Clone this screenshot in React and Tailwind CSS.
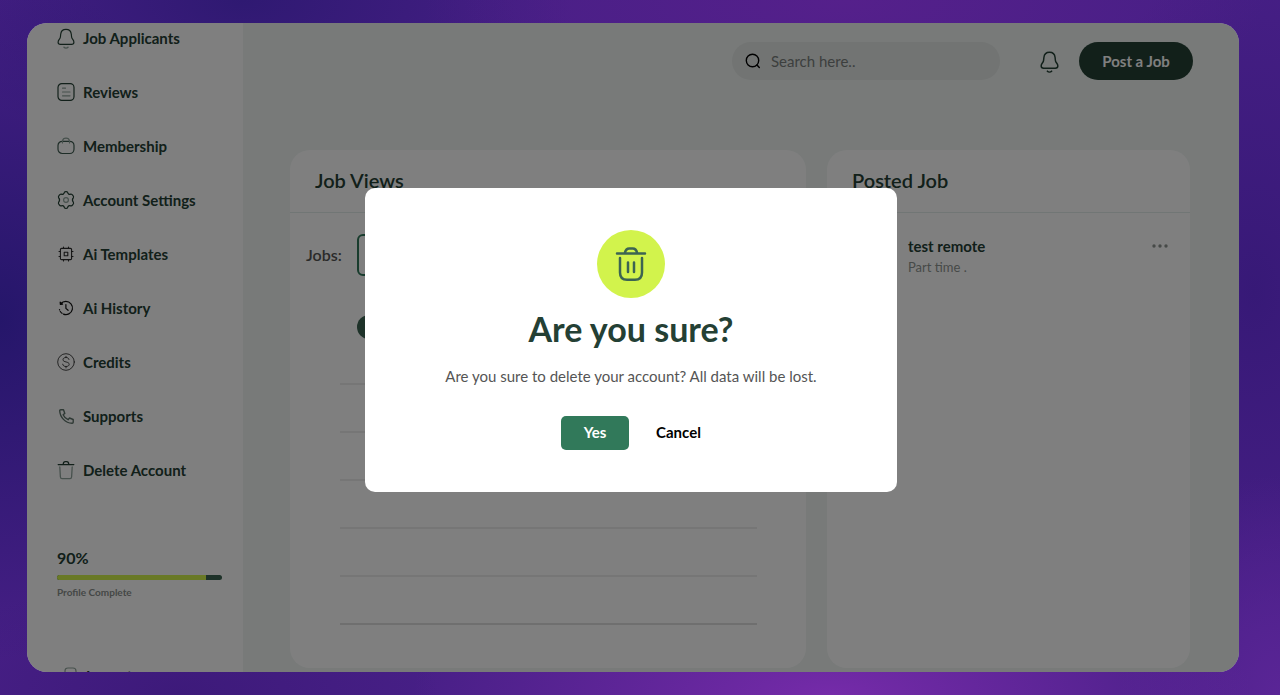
import { useState } from 'react';

const iconProps = {
  width: 18,
  height: 18,
  viewBox: '0 0 18 18',
  fill: 'none',
  strokeLinecap: 'round',
  strokeLinejoin: 'round',
};

const BellIcon = ({ size = 18, soft = '#8fa39b', weight = 1.2 }) => (
  <svg {...iconProps} width={size} height={size} stroke="#244034" strokeWidth={weight} className="overflow-visible">
    <path d="M9 .3C6 .3 4 2.300 3.700 5.200L3.400 8C3.200 10.200 1.100 10.900 1.100 13.200c0 1.500 1 2.100 2.400 2.100h11c1.400 0 2.400-.6 2.400-2.100 0-2.300-2.100-3-2.300-5.200l-.3-2.800C14 2.300 12 .3 9 .3z" />
    <path d="M7 18.200c1 1 3 1 4 0" stroke={soft} strokeWidth="1.500" />
  </svg>
);

const ReviewsIcon = () => (
  <svg {...iconProps} stroke="#244034" strokeWidth="1.200">
    <rect x="1" y=".6" width="16" height="16.800" rx="3.800" />
    <path d="M5.500 5.200h3M5.500 9h7.500M5.500 12.800h7.500" stroke="#8fa39b" />
  </svg>
);

const BagIcon = () => (
  <svg {...iconProps} stroke="#3d5a4f" strokeWidth="1.200">
    <rect x="1" y="4.300" width="16" height="12.200" rx="4.200" />
    <path d="M5.500 4.100C6 .2 12 .2 12.500 4.100M5.500 4.500v1.500M12.500 4.500v1.500" stroke="#8fa39b" />
  </svg>
);

const GearIcon = () => (
  <svg {...iconProps} stroke="#244034" strokeWidth="1.200">
    <path d="M7.400 1.400c.3-1 2.900-1 3.200 0 .4 1.700 1.600 2.300 3.100 1.700 1.400-.5 3.500 2.500 2.700 3.600-1.300 1.500-1.300 3.100 0 4.600.8 1.100-1.300 4.100-2.700 3.600-1.500-.6-2.700 0-3.100 1.700-.3 1-2.900 1-3.200 0-.4-1.700-1.600-2.300-3.100-1.700-1.400.5-3.500-2.500-2.700-3.600 1.300-1.500 1.300-3.100 0-4.600-.8-1.100 1.300-4.100 2.700-3.600 1.500.6 2.700 0 3.100-1.700z" />
    <circle cx="9" cy="9" r="2.400" stroke="#8fa39b" />
  </svg>
);

const ChipIcon = () => (
  <svg {...iconProps} stroke="#2a2a2a" strokeWidth="1.100">
    <rect x="3.400" y="3.400" width="11.200" height="11.200" rx="1.200" />
    <rect x="7.200" y="7.200" width="3.600" height="3.600" />
    <path d="M6.500 2v1.400M11.500 2v1.400M6.500 14.600V16M11.500 14.600V16M2 6.500h1.400M2 11.500h1.400M14.600 6.500H16M14.600 11.500H16" />
  </svg>
);

const HistoryIcon = () => (
  <svg {...iconProps} stroke="#111" strokeWidth="1.200">
    <path d="M3.700 4.900a6.600 6.600 0 1 1-1.200 5.700" strokeDasharray="29 1.600 2.500 1.600" />
    <path d="M3.200 3.200l.2 2.200 2.200-.3z" fill="#111" />
    <path d="M8.900 5.600v3.800l2.200 1.900" />
  </svg>
);

const DollarIcon = () => (
  <svg {...iconProps} stroke="#333" strokeWidth=".9">
    <circle cx="9" cy="9" r="8.300" />
    <path d="M9 3.300v1.300M9 13.600v1.300M12 6.500c-.2-1.300-1.400-2-3-2-1.800 0-3 .8-3 2.200 0 3 6.200 1.500 6.200 4.600 0 1.400-1.400 2.200-3.200 2.200s-3.100-.8-3.300-2.300" />
  </svg>
);

const PhoneIcon = () => (
  <svg {...iconProps} stroke="#5d7269" strokeWidth="1.400">
    <path d="M3.800 2.700h2.700l1.300 3.700-1.700 1.300c1 2.200 2.700 3.900 5 5l1.400-1.700 3.700 1.500v2.700c0 .7-.5 1.100-1.100 1.100C8.300 16 3 10.300 2.700 3.800c0-.6.4-1.100 1.100-1.100z" />
  </svg>
);

const TrashIcon = () => (
  <svg {...iconProps} stroke="#244034" strokeWidth="1.300" className="overflow-visible">
    <path d="M1.200 3.600h15.600M6.200 3.400c.2-2.200 1-2.700 2-2.700h1.600c1 0 1.800.5 2 2.700" />
    <path d="M2.800 6l.6 10c.1 1.200.6 1.600 1.600 1.600h8c1 0 1.500-.4 1.600-1.600l.6-10" stroke="#8fa39b" />
  </svg>
);

const LogoutIcon = () => (
  <svg {...iconProps} stroke="#8fa39b" strokeWidth="1.200">
    <path d="M5 6V4c0-2 1-3 3-3h5c2 0 3 1 3 3v10c0 2-1 3-3 3H8c-2 0-3-1-3-3v-2" />
    <path d="M11 9H1M3.500 6.500L1 9l2.500 2.500" stroke="#244034" />
  </svg>
);

const navItems = [
  { label: 'Job Applicants', Icon: BellIcon },
  { label: 'Reviews', Icon: ReviewsIcon },
  { label: 'Membership', Icon: BagIcon },
  { label: 'Account Settings', Icon: GearIcon },
  { label: 'Ai Templates', Icon: ChipIcon },
  { label: 'Ai History', Icon: HistoryIcon },
  { label: 'Credits', Icon: DollarIcon },
  { label: 'Supports', Icon: PhoneIcon },
  { label: 'Delete Account', Icon: TrashIcon },
];

const Sidebar = ({ progress }) => (
  <aside className="w-[216px] shrink-0 bg-white pl-[30px] pr-[21px] text-[15px] font-bold text-[#244034]">
    <nav className="-mt-3">
      {navItems.map(({ label, Icon }) => (
        <a key={label} href="#" className="flex h-[54px] items-center gap-2">
          <Icon />
          {label}
        </a>
      ))}
    </nav>
    <div className="mt-12">
      <p className="text-base leading-[26px]">{progress}%</p>
      <div className="mt-1 h-[5px] overflow-hidden rounded-full bg-[#3c6452]">
        <div className="h-full bg-[#d2f34c]" style={{ width: `${progress}%` }} />
      </div>
      <p className="mt-1 text-[10px] leading-4 text-[#8a8f8d]">Profile Complete</p>
    </div>
    <a href="#" className="mt-16 flex h-6 items-center gap-2 pl-[3px]">
      <LogoutIcon />
      Logout
    </a>
  </aside>
);

const Header = () => (
  <header className="flex h-[38px] items-center justify-end">
    <label className="flex h-full w-[268px] items-center gap-[10px] rounded-full bg-[#e4e8e6] pl-[13px]">
      <svg width="16" height="16" viewBox="0 0 16 16" fill="none" stroke="#000" strokeWidth="1.400" strokeLinecap="round" className="shrink-0">
        <circle cx="7.500" cy="7.500" r="6.200" />
        <path d="M12 12l2.300 2.500" />
      </svg>
      <input
        type="text"
        aria-label="Search"
        placeholder="Search here.."
        className="w-full bg-transparent text-[15px] outline-none placeholder:text-[#7a7f7d]"
      />
    </label>
    <button aria-label="Notifications" className="mr-5 ml-10">
      <BellIcon size={19} soft="#244034" weight={1.400} />
    </button>
    <button className="h-full w-[114px] rounded-full bg-[#244034] text-[15px] font-bold text-white">Post a Job</button>
  </header>
);

const JobViews = () => (
  <section className="flex grow-[516] basis-0 flex-col rounded-[20px] bg-white">
    <h2 className="border-b border-[#e3edea] pb-[2px] pl-[25px] text-xl leading-[60px] font-semibold text-[#244034]">Job Views</h2>
    <div className="mt-[21px] flex items-center pl-4">
      <label htmlFor="jobs" className="w-[51px] text-base font-semibold text-[#555]">
        Jobs:
      </label>
      <select id="jobs" className="h-[42px] w-[210px] rounded-md border-2 border-[#31795a] bg-white px-3" />
    </div>
    <div className="mt-[39px] ml-[67px] h-6 w-20 rounded-full bg-[#3c6452]" />
    {/* chart grid */}
    <div className="mt-11 mr-[49px] ml-[50px] flex flex-col gap-[46px]">
      {[0, 1, 2, 3, 4].map((n) => (
        <div key={n} className="h-[2px] bg-[#ececec]" />
      ))}
      <div className="h-[2px] bg-[#dedede]" />
    </div>
  </section>
);

const PostedJob = () => (
  <section className="grow-[363] basis-0 rounded-[20px] bg-white">
    <h2 className="border-b border-[#e3edea] pb-[2px] pl-[25px] text-xl leading-[60px] font-semibold text-[#244034]">Posted Job</h2>
    <div className="mt-5 flex items-start justify-between pr-[22px] pl-[81px]">
      <div>
        <h3 className="text-[15px] leading-[26px] font-bold text-[#244034]">test remote</h3>
        <p className="text-[13px] leading-4 text-[#8e9491]">Part time .</p>
      </div>
      <button aria-label="More options" className="flex h-[26px] items-center">
        <svg width="16" height="4" viewBox="0 0 16 4" fill="#8e9491">
          <circle cx="2" cy="2" r="1.700" />
          <circle cx="8" cy="2" r="1.700" />
          <circle cx="14" cy="2" r="1.700" />
        </svg>
      </button>
    </div>
  </section>
);

const DeleteModal = ({ onClose }) => (
  <div className="absolute inset-0 flex items-center justify-center bg-black/50 pr-1 pb-4">
    <div
      role="dialog"
      aria-labelledby="delete-title"
      className="flex w-[532px] flex-col items-center rounded-[10px] bg-white py-[42px]"
    >
      <div className="flex size-[68px] items-center justify-center rounded-full bg-[#d2f34c]">
        <svg width="34" height="36" viewBox="0 0 34 36" fill="none" stroke="#3c6452" strokeWidth="2.500" strokeLinecap="round">
          <path d="M3 7.500h28M10.800 7c.8-3.200 2.200-4.500 4.400-4.500h3.600c2.200 0 3.600 1.300 4.400 4.500" />
          <path d="M6 12v14.500c0 5 2.800 7.300 7 7.300h8c4.200 0 7-2.300 7-7.300V12M14 16.500v9.500M20 16.500v9.500" />
        </svg>
      </div>
      <h1 id="delete-title" className="mt-2 text-[34px] leading-[46px] font-bold text-[#244034]">
        Are you sure?
      </h1>
      <p className="mt-[10px] text-[15px] leading-[28px] text-[#555]">Are you sure to delete your account? All data will be lost.</p>
      <div className="mt-[26px] flex items-center gap-[27px] text-[15px] font-bold">
        <button onClick={onClose} className="h-[34px] w-[68px] rounded-[5px] bg-[#31795a] text-white">
          Yes
        </button>
        <button onClick={onClose} className="text-black">
          Cancel
        </button>
      </div>
    </div>
  </div>
);

const App = () => {
  const [open, setOpen] = useState(true);

  return (
    <div className="h-screen bg-[#471f86] bg-[radial-gradient(ellipse_420px_150px_at_65%_100%,#752ba9,transparent),radial-gradient(ellipse_420px_150px_at_66%_0%,#55208b,transparent),radial-gradient(ellipse_260px_340px_at_0%_46%,#25166a,transparent),radial-gradient(ellipse_330px_160px_at_19%_0%,#2f1972,transparent),radial-gradient(ellipse_260px_120px_at_14%_100%,#3d1a7a,transparent),radial-gradient(ellipse_160px_220px_at_100%_100%,#5a2596,transparent),radial-gradient(ellipse_200px_340px_at_98%_42%,#371977,transparent)] py-[23px] pr-[41px] pl-[27px] font-['Lato',sans-serif]">
      <div className="relative flex h-full overflow-hidden rounded-[20px]">
        <Sidebar progress={90} />
        <main className="flex min-w-0 grow flex-col bg-[#f0f5f3] pt-[19px] pr-[46px] pb-1 pl-[47px]">
          <Header />
          <div className="mt-[70px] mr-[3px] flex grow gap-[21px]">
            <JobViews />
            <PostedJob />
          </div>
        </main>
        {open && <DeleteModal onClose={() => setOpen(false)} />}
      </div>
    </div>
  );
};

export default App;
